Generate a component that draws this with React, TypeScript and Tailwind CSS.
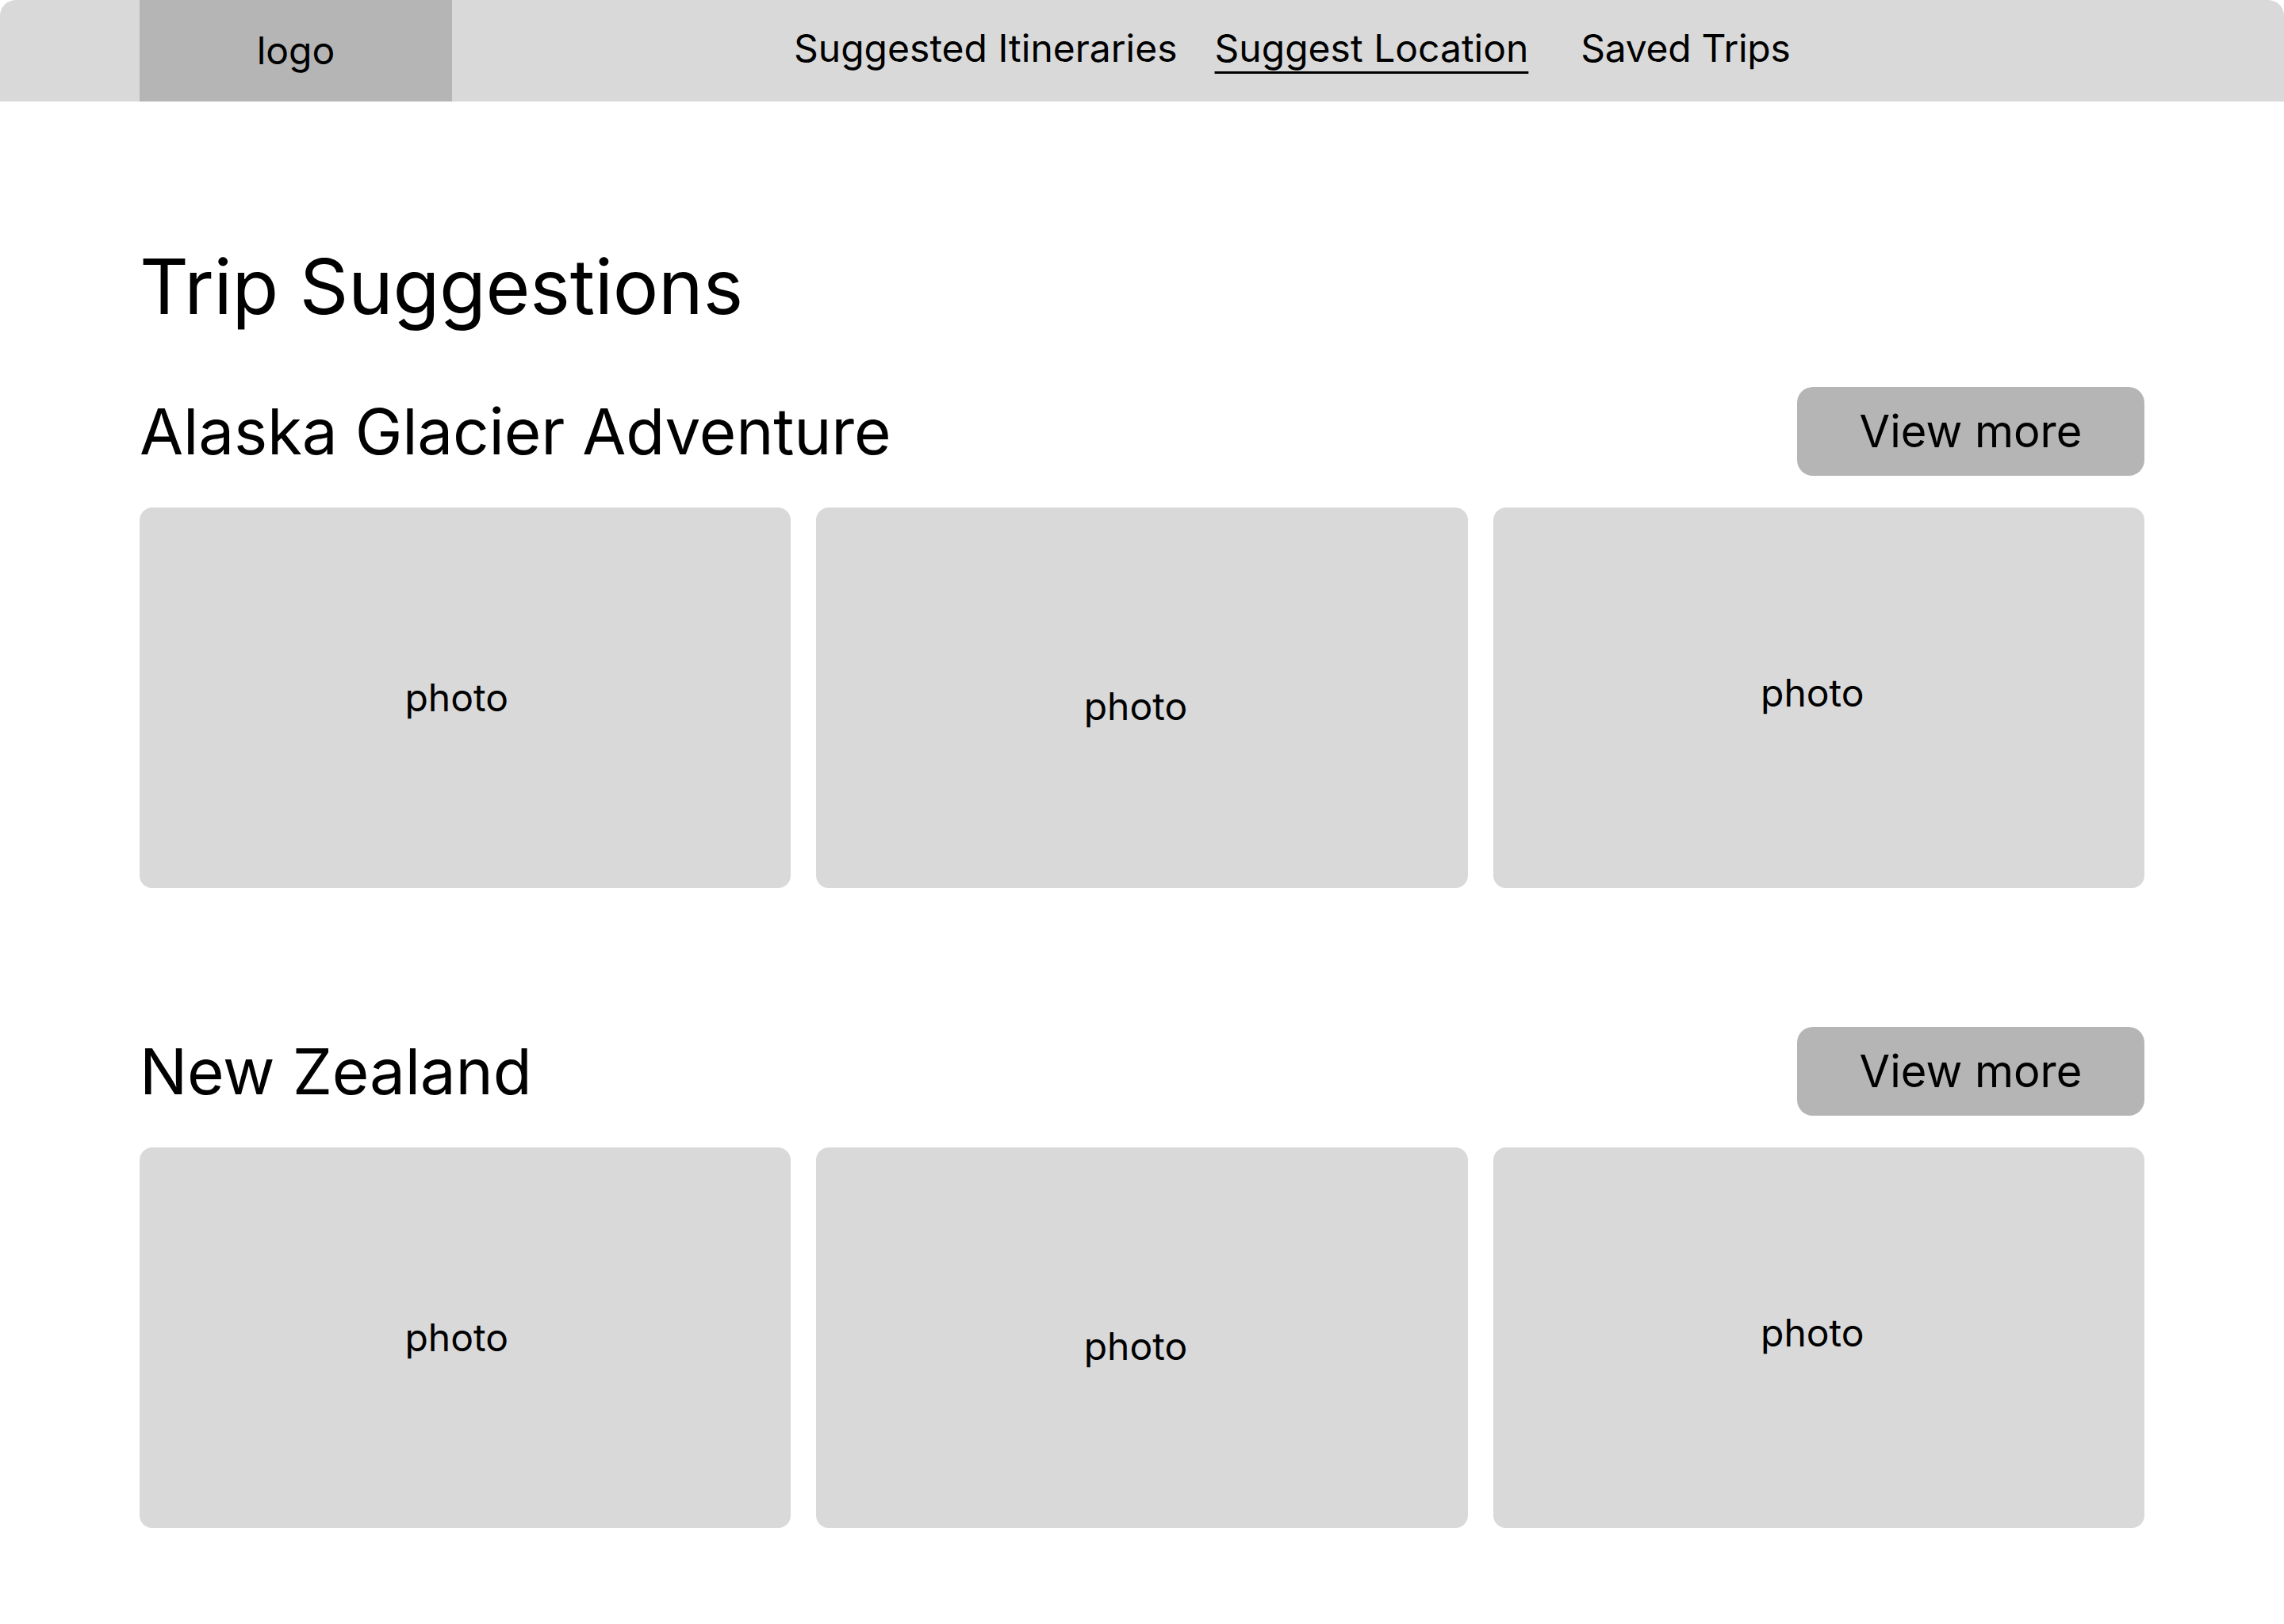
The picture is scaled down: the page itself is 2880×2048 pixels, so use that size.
import React from "react";

const font = { fontFamily: "Inter, 'Noto Sans', sans-serif" };

type Trip = {
  title: string;
};

const trips: Trip[] = [{ title: "Alaska Glacier Adventure" }, { title: "New Zealand" }];

function Header() {
  return (
    <header className="flex h-[128px] items-stretch bg-[#d9d9d9] pl-[176px]">
      <div className="flex w-[394px] items-center justify-center bg-[#b5b5b5] text-[48px] leading-none text-black">
        logo
      </div>
      <nav className="flex items-center pb-[6px] text-[48px] leading-none text-black">
        <a className="ml-[431px]">Suggested Itineraries</a>
        <a className="ml-[47px] underline decoration-[3px] underline-offset-[12px]">Suggest Location</a>
        <a className="ml-[66px] tracking-[-0.3px]">Saved Trips</a>
      </nav>
    </header>
  );
}

function PhotoCard({ shift }: { shift: string }) {
  return (
    <div className="flex h-[480px] items-center justify-center rounded-[16px] bg-[#d9d9d9]">
      <span className={`text-[48px] leading-none text-black ${shift}`}>photo</span>
    </div>
  );
}

function TripSection({ trip, first }: { trip: Trip; first: boolean }) {
  return (
    <section className={first ? "mt-[69px]" : "mt-[175px]"}>
      <div className="flex h-[112px] items-center justify-between">
        <h2 className="text-[80px] leading-[96px] font-normal tracking-[-0.2px] text-black">{trip.title}</h2>
        <button className="flex h-[112px] w-[438px] items-center justify-center rounded-[20px] bg-[#b5b5b5] text-[56px] leading-none text-black">
          View more
        </button>
      </div>
      <div className="mt-[40px] grid grid-cols-3 gap-[32px]">
        <PhotoCard shift="mr-[22px]" />
        <PhotoCard shift="mr-[16px] mt-[22px]" />
        <PhotoCard shift="mr-[16px] mb-[12px]" />
      </div>
    </section>
  );
}

export default function App() {
  return (
    <div className="min-h-[2048px] w-[2880px] overflow-hidden rounded-[20px] bg-white" style={font}>
      <Header />
      <main className="px-[176px]">
        <h1 className="mt-[175px] text-[96px] leading-[116px] font-normal tracking-[-0.3px] text-black">Trip Suggestions</h1>
        {trips.map((trip, i) => (
          <TripSection key={trip.title} trip={trip} first={i === 0} />
        ))}
      </main>
    </div>
  );
}
